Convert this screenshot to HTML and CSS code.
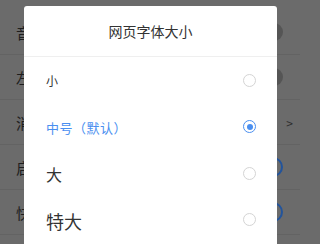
FILE: index.html
```html
<!DOCTYPE html>
<html lang="zh">
<head>
<meta charset="utf-8">
<link rel="stylesheet" href="styles.css">
</head>
<body>
<div class="page">
  <div class="row"><span class="label">音量键翻页</span><span class="knob"></span></div>
  <div class="row"><span class="label">左右滑动翻页</span><span class="knob"></span></div>
  <div class="row"><span class="label">消息推送</span><span class="chev">&gt;</span></div>
  <div class="row"><span class="label">启动时加载</span><span class="ring"></span></div>
  <div class="row"><span class="label">快速浏览</span><span class="ring"></span></div>
</div>
<div class="dialog">
  <div class="dialog-title">网页字体大小</div>
  <div class="option"><span class="opt-text s1">小</span><span class="radio"></span></div>
  <div class="option active"><span class="opt-text s2">中号（默认）</span><span class="radio checked"></span></div>
  <div class="option"><span class="opt-text s3">大</span><span class="radio"></span></div>
  <div class="option"><span class="opt-text s4">特大</span><span class="radio"></span></div>
</div>
</body>
</html>
```
FILE: styles.css
```css
html, body {
  margin: 0;
  padding: 0;
}
body {
  width: 300px;
  height: 244px;
  overflow: hidden;
  position: relative;
  background: #6b6b6b;
  font-family: "Noto Sans CJK SC", "Noto Sans", sans-serif;
}
.page {
  padding-top: 10px;
  height: 234px;
  overflow: hidden;
}
.row {
  height: 45px;
  box-sizing: border-box;
  border-bottom: 1px solid #636363;
  display: flex;
  align-items: center;
  justify-content: space-between;
  padding: 0 17px 0 16px;
}
.label {
  font-size: 15px;
  color: #1e1e1e;
  width: 8px;
  overflow: hidden;
  white-space: nowrap;
}
.knob {
  width: 18px;
  height: 18px;
  border-radius: 50%;
  background: #555;
}
.ring {
  width: 16px;
  height: 16px;
  border-radius: 50%;
  border: 2px solid #22549c;
}
.chev {
  font-size: 12px;
  color: #2e2e2e;
  margin-right: -10px;
}
.dialog {
  position: absolute;
  left: 24px;
  top: 6px;
  width: 253px;
  height: 238px;
  overflow: hidden;
  background: #fff;
  border-radius: 3px 3px 0 0;
}
.dialog-title {
  height: 50px;
  border-bottom: 1px solid #efefef;
  display: flex;
  align-items: center;
  justify-content: center;
  font-size: 14px;
  color: #333;
}
.option {
  height: 46.5px;
  display: flex;
  align-items: center;
  justify-content: space-between;
  padding: 0 21px 0 22px;
}
.opt-text {
  color: #333;
  line-height: 1;
  padding-top: 2px;
}
.s1 { font-size: 12px; }
.s2 { font-size: 13px; color: #4a8ff0; letter-spacing: 0.5px; }
.s3 { font-size: 16px; }
.s4 { font-size: 18px; }
.radio {
  width: 13px;
  height: 13px;
  box-sizing: border-box;
  border-radius: 50%;
  border: 1px solid #d4d4d4;
  display: flex;
  align-items: center;
  justify-content: center;
}
.radio.checked {
  border-color: #4a8ff0;
}
.radio.checked::after {
  content: "";
  width: 6px;
  height: 6px;
  border-radius: 50%;
  background: #4a8ff0;
}
```
